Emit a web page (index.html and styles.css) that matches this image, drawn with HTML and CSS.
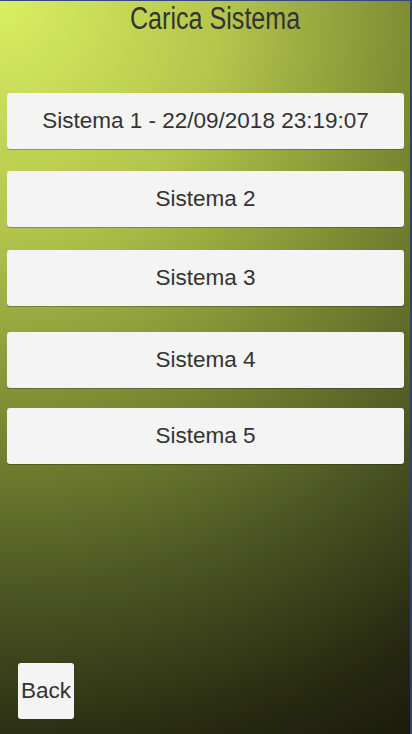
FILE: index.html
```html
<!DOCTYPE html>
<html lang="it">
<head>
  <meta charset="UTF-8">
  <meta name="viewport" content="width=device-width, initial-scale=1.0">
  <link rel="stylesheet" href="styles.css">
  <title>Carica Sistema</title>
</head>
<body>

  <div class="screen">
    <h1 class="title"><span>Carica Sistema</span></h1>

    <div class="slots">
      <button class="slot">Sistema 1 - 22/09/2018 23:19:07</button>
      <button class="slot">Sistema 2</button>
      <button class="slot">Sistema 3</button>
      <button class="slot">Sistema 4</button>
      <button class="slot">Sistema 5</button>
    </div>

    <div class="footer">
      <button class="back">Back</button>
    </div>
  </div>

</body>
</html>
```

FILE: styles.css
```css
html, body {
  margin: 0;
  height: 100%;
}

body {
  font-family: 'Liberation Sans', Arial, sans-serif;
  background: #121208;
}

.screen {
  box-sizing: border-box;
  height: 734px;
  display: flex;
  flex-direction: column;
  border-top: 1px solid #2f4c7a;
  border-right: 2px solid #2d4466;
  background: radial-gradient(circle at 0 0, #d9ef62 0, #b2c44b 230px, #7b8a32 420px, #4a5322 600px, #262910 760px, #111108 900px);
}

.title {
  margin: 0;
  height: 35px;
  text-align: center;
  font-size: 31px;
  font-weight: normal;
  line-height: 35px;
  color: #333;
}

.title span {
  display: inline-block;
  transform: scaleX(0.81);
  margin-left: 20px;
}

.slots {
  display: flex;
  flex-direction: column;
  padding: 57px 6px 0 7px;
}

.slot {
  height: 56px;
  margin-top: 22px;
  border: none;
  border-radius: 3px;
  background: #f4f4f4;
  box-shadow: 0 1px 0 rgba(0, 0, 0, 0.25);
  font-family: inherit;
  font-size: 22.5px;
  color: #333;
  padding: 0;
}

.slot:first-child { margin-top: 0; }
.slot:nth-child(3) { margin-top: 23px; }
.slot:nth-child(4) { margin-top: 26px; }
.slot:nth-child(5) { margin-top: 20px; }

.footer {
  margin-top: auto;
  padding: 0 0 15px 18px;
}

.back {
  width: 56px;
  height: 56px;
  border: none;
  border-radius: 3px;
  background: #f4f4f4;
  font-family: inherit;
  font-size: 22.5px;
  color: #333;
  padding: 0;
  overflow: visible;
  white-space: nowrap;
}
```
